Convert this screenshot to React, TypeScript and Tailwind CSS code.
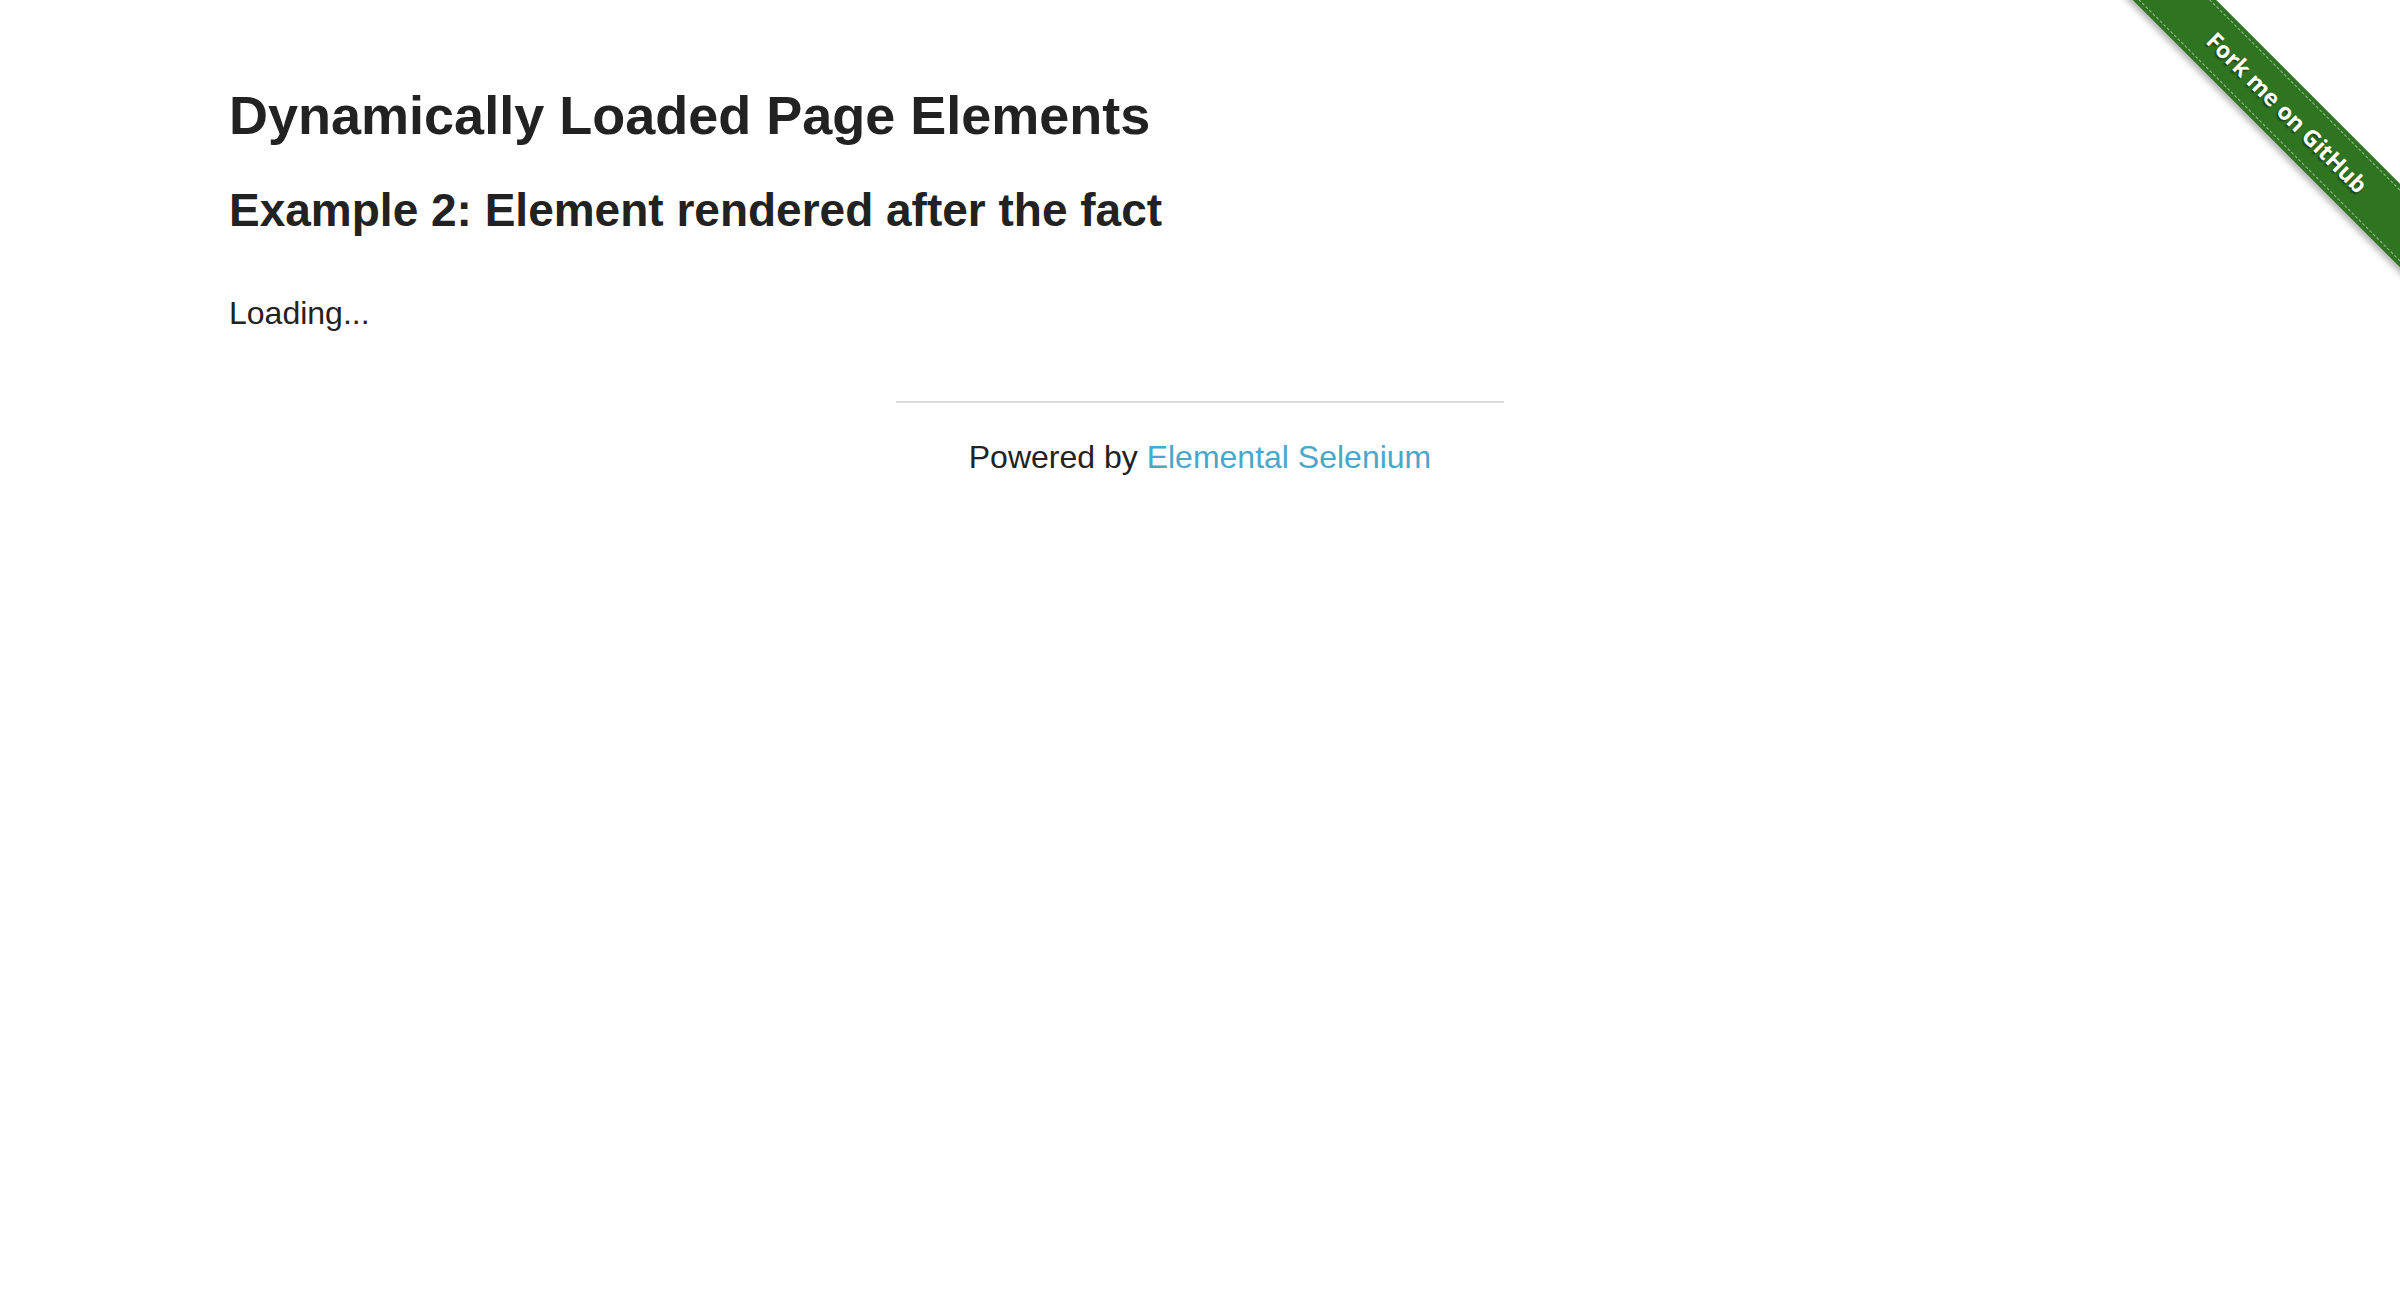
const FONT = { fontFamily: '"Liberation Sans", Arial, sans-serif' };

function ForkRibbon() {
  return (
    <div className="absolute top-0 right-0 w-[300px] h-[300px] overflow-hidden pointer-events-none">
      <a
        href="#"
        className="pointer-events-auto absolute left-[-23px] top-[83px] w-[420px] h-[59px] rotate-45 bg-[#2f7521] flex items-center justify-center shadow-[0_4px_6px_rgba(0,0,0,0.3)]"
      >
        <span className="absolute inset-x-0 top-[4px] border-t border-dashed border-white/50" />
        <span className="absolute inset-x-0 bottom-[4px] border-t border-dashed border-white/50" />
        <span
          className="text-white text-[23px] font-bold [text-shadow:0_2px_2px_rgba(0,0,0,0.5)]"
          style={{ fontFamily: '"Open Sans", "DejaVu Sans", sans-serif' }}
        >
          Fork me on GitHub
        </span>
      </a>
    </div>
  );
}

export default function App() {
  return (
    <div className="relative min-h-[1316px] bg-white text-[#222]" style={FONT}>
      <ForkRibbon />

      <div className="max-w-[2000px] mx-auto px-[29px] pt-[83px]">
        <h3 className="text-[54px] leading-[64px] font-bold">Dynamically Loaded Page Elements</h3>
        <h4 className="mt-[35px] text-[46px] leading-[56px] font-bold">
          Example 2: Element rendered after the fact
        </h4>
        <div className="mt-[55px] text-[32px] leading-[40px]">Loading...</div>
      </div>

      <div className="w-[608px] mx-auto mt-[68px]">
        <hr className="border-0 border-t-2 border-[#ddd]" />
        <div className="mt-[34px] text-center text-[32px] leading-[40px]">
          Powered by{' '}
          <a href="#" className="text-[#4ba6cc]">
            Elemental Selenium
          </a>
        </div>
      </div>
    </div>
  );
}
